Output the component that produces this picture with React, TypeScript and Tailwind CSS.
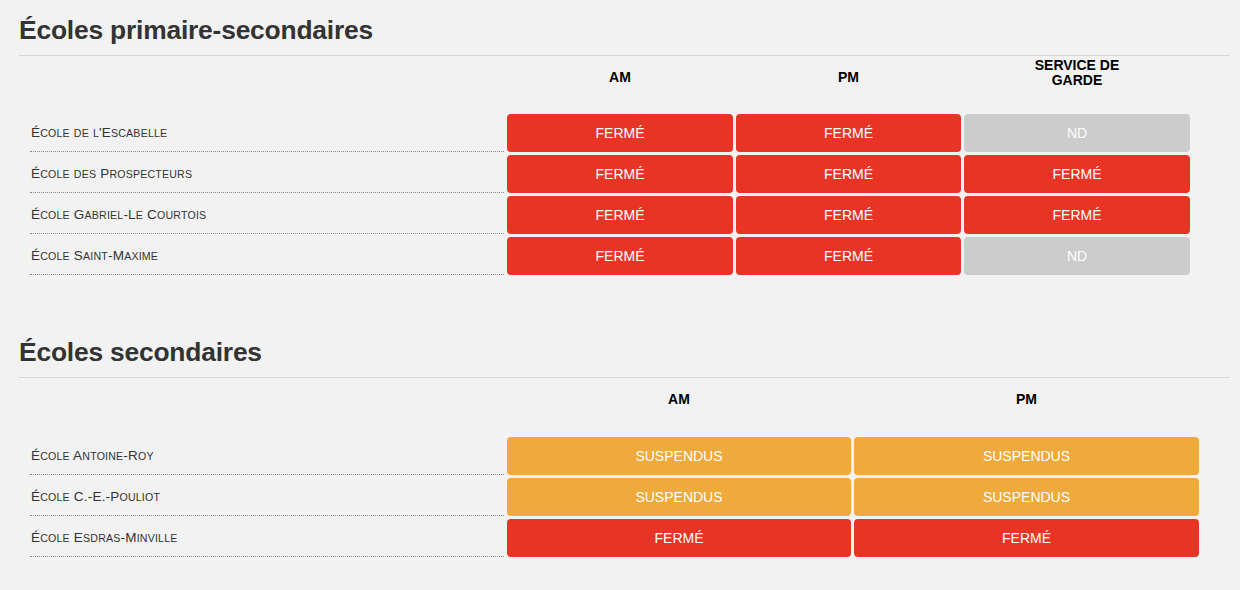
import React from 'react';

type Status = 'FERMÉ' | 'ND' | 'SUSPENDUS';

const statusClass: Record<Status, string> = {
  'FERMÉ': 'bg-[#e83424]',
  ND: 'bg-[#cccccc]',
  SUSPENDUS: 'bg-[#f0a93b]',
};

const primaires: { name: string; cells: Status[] }[] = [
  { name: "École de l'Escabelle", cells: ['FERMÉ', 'FERMÉ', 'ND'] },
  { name: 'École des Prospecteurs', cells: ['FERMÉ', 'FERMÉ', 'FERMÉ'] },
  { name: 'École Gabriel-Le Courtois', cells: ['FERMÉ', 'FERMÉ', 'FERMÉ'] },
  { name: 'École Saint-Maxime', cells: ['FERMÉ', 'FERMÉ', 'ND'] },
];

const secondaires: { name: string; cells: Status[] }[] = [
  { name: 'École Antoine-Roy', cells: ['SUSPENDUS', 'SUSPENDUS'] },
  { name: 'École C.-E.-Pouliot', cells: ['SUSPENDUS', 'SUSPENDUS'] },
  { name: 'École Esdras-Minville', cells: ['FERMÉ', 'FERMÉ'] },
];

// small caps by hand: lowercase runs are uppercased at a smaller size
const SmallCaps: React.FC<{ text: string }> = ({ text }) => {
  const parts = text.match(/[a-zà-ÿ]+|[^a-zà-ÿ]+/g) || [];
  return (
    <>
      {parts.map((p, i) =>
        /[a-zà-ÿ]/.test(p) ? (
          <span key={i} className="uppercase text-[10.6px]">
            {p}
          </span>
        ) : (
          <span key={i}>{p}</span>
        )
      )}
    </>
  );
};

const Cell: React.FC<{ status: Status }> = ({ status }) => (
  <div
    className={`h-[38px] rounded-[4px] flex items-center justify-center text-white text-[14px] ${statusClass[status]}`}
  >
    {status}
  </div>
);

const NameCell: React.FC<{ name: string }> = ({ name }) => (
  <div className="h-[38px] flex items-center pl-px pt-[2px] border-b border-dotted border-[#8a8a8a] text-[13.5px] tracking-[0.2px] text-[#333]">
    <span>
      <SmallCaps text={name} />
    </span>
  </div>
);

const Heading: React.FC<{ title: string }> = ({ title }) => (
  <div>
    <h2 className="text-[26.4px] leading-[30px] font-bold text-[#333] tracking-[-0.2px]">{title}</h2>
    <div className="mt-[10px] h-px bg-[#d6d6d6]" />
  </div>
);

export default function App() {
  return (
    <div className="w-[1240px] h-[590px] bg-[#f2f2f2] pl-[19px] pr-[10px] pt-[15px] font-['Liberation_Sans',Arial,sans-serif] overflow-hidden">
      {/* Primaire-secondaires */}
      <Heading title="Écoles primaire-secondaires" />
      <div className="pl-[11px] grid grid-cols-[474px_226px_225px_226px] gap-x-[3px] gap-y-[3px]">
        <div className="h-[55px]" />
        <div className="text-center text-[14px] font-bold text-black leading-[15px] pt-[14px]">AM</div>
        <div className="text-center text-[14px] font-bold text-black leading-[15px] pt-[14px]">PM</div>
        <div className="text-center text-[14px] font-bold text-black leading-[15px] pt-[2px]">
          SERVICE DE
          <br />
          GARDE
        </div>
        {primaires.map((r) => (
          <React.Fragment key={r.name}>
            <NameCell name={r.name} />
            {r.cells.map((c, i) => (
              <Cell key={i} status={c} />
            ))}
          </React.Fragment>
        ))}
      </div>

      {/* Secondaires */}
      <div className="mt-[62px]">
        <Heading title="Écoles secondaires" />
        <div className="pl-[11px] grid grid-cols-[474px_344px_345px] gap-x-[3px] gap-y-[3px]">
          <div className="h-[56px]" />
          <div className="text-center text-[14px] font-bold text-black leading-[15px] pt-[14px]">AM</div>
          <div className="text-center text-[14px] font-bold text-black leading-[15px] pt-[14px]">PM</div>
          {secondaires.map((r) => (
            <React.Fragment key={r.name}>
              <NameCell name={r.name} />
              {r.cells.map((c, i) => (
                <Cell key={i} status={c} />
              ))}
            </React.Fragment>
          ))}
        </div>
      </div>
    </div>
  );
}
